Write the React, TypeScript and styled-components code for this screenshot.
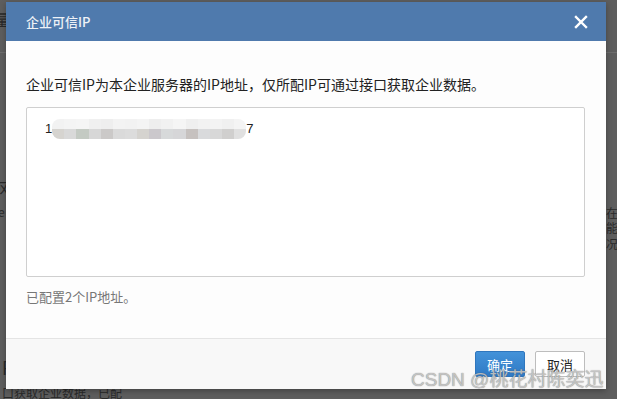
import React from "react";
import styled, { createGlobalStyle } from "styled-components";

const Global = createGlobalStyle`
  html, body { margin: 0; padding: 0; }
  body {
    width: 617px; height: 399px; overflow: hidden;
    font-family: "Noto Sans CJK SC", "Noto Sans", sans-serif;
  }
`;

const Overlay = styled.div`
  position: relative;
  width: 617px;
  height: 399px;
  background: #5e5e5e;
  overflow: hidden;
  box-sizing: border-box;
  padding: 2px 0 0 6px;
`;

const Ghost = styled.span<{ $x: number; $y: number; $size?: number }>`
  position: absolute;
  left: ${(p) => p.$x}px;
  top: ${(p) => p.$y}px;
  font-size: ${(p) => p.$size ?? 13}px;
  color: #2a2a2a;
  line-height: 1;
  white-space: nowrap;
`;

const GhostLine = styled.div<{ $x: number; $y: number; $w: number }>`
  position: absolute;
  left: ${(p) => p.$x}px;
  top: ${(p) => p.$y}px;
  width: ${(p) => p.$w}px;
  height: 1px;
  background: #6e6e6e;
`;

const Dialog = styled.div`
  position: relative;
  width: 600px;
  height: 387px;
  display: flex;
  flex-direction: column;
  background: #fdfdfd;
  box-shadow: 0 2px 6px rgba(0, 0, 0, 0.3);
`;

const Header = styled.div`
  height: 39px;
  flex: none;
  background: #4f7aad;
  display: flex;
  align-items: center;
  justify-content: space-between;
  padding: 0 18px 0 20px;
`;

const Title = styled.span`
  color: #eef2f7;
  font-size: 13px;
  font-weight: 500;
`;

const Close = styled.span`
  display: flex;
  width: 14px;
  height: 14px;
`;

const Body = styled.div`
  flex: 1;
  display: flex;
  flex-direction: column;
  padding: 33px 21px 0 20px;
`;

const Intro = styled.p`
  margin: 0;
  font-size: 14px;
  line-height: 20px;
  color: #222;
`;

const IpBox = styled.div`
  margin-top: 13px;
  height: 170px;
  box-sizing: border-box;
  border: 1px solid #cfcfcf;
  border-radius: 2px;
  background: #fff;
  padding: 11px 18px;
  font-size: 13px;
  color: #222;
  line-height: 20px;
  display: flex;
  flex-direction: column;
  align-items: flex-start;
`;

const IpLine = styled.div`
  display: flex;
  align-items: center;
  height: 20px;
  font-family: "Liberation Sans", Arial, sans-serif;
`;

const Mosaic = styled.span`
  display: inline-flex;
  flex-direction: column;
  width: 194px;
  height: 20px;
  border-radius: 8px;
  overflow: hidden;
  filter: blur(0.4px);
`;

const MosaicRow = styled.span`
  display: flex;
  flex: 1;
`;

const Cell = styled.span`
  flex: 1;
  height: 100%;
`;

const Hint = styled.p`
  margin: 10px 0 0;
  font-size: 13px;
  line-height: 20px;
  color: #777;
`;

const Footer = styled.div`
  height: 51px;
  flex: none;
  box-sizing: border-box;
  border-top: 1px solid #e4e4e4;
  background: #f8f8f8;
  display: flex;
  justify-content: flex-end;
  align-items: flex-start;
  gap: 10px;
  padding: 12px 21px 0 0;
`;

const Button = styled.button<{ $primary?: boolean }>`
  width: 50px;
  height: 26px;
  box-sizing: border-box;
  border-radius: 2px;
  font-family: "Noto Sans CJK SC", sans-serif;
  font-size: 13px;
  padding: 0;
  cursor: pointer;
  border: 1px solid ${(p) => (p.$primary ? "#2f76bd" : "#bdbdbd")};
  background: ${(p) =>
    p.$primary ? "linear-gradient(#4392d9, #2f7ac5)" : "#fff"};
  color: ${(p) => (p.$primary ? "#fff" : "#222")};
`;

const Watermark = styled.span`
  position: absolute;
  left: 411px;
  top: 367px;
  font-size: 19px;
  line-height: 26px;
  color: rgba(215, 215, 215, 0.8);
  text-shadow: 0 0 1px rgba(70, 70, 70, 0.8);
  white-space: nowrap;
  font-family: "Liberation Sans", "Noto Sans CJK SC", sans-serif;
`;

const top = ["#f2f2f2", "#f4f4f4", "#f5f5f5", "#f0f0f0", "#eeeeee", "#f3f3f3", "#f2f2f2", "#f4f4f4", "#eeeeee", "#f1f1f1", "#f5f5f5", "#efefef", "#f2f2f2", "#f3f3f3", "#f0f0f0", "#f4f4f4"];
const bottom = ["#d6d4d0", "#d9d9d9", "#c4cac3", "#d7d7d7", "#cbc9c8", "#dadada", "#dcdcdc", "#d5d3cf", "#cbc8cc", "#d7d9da", "#d6d6d8", "#c6c1bf", "#d9dadc", "#d8d8d8", "#d0cfce", "#e0e0e0"];

export default function App() {
  return (
    <>
      <Global />
      <Overlay>
        <GhostLine $x={0} $y={52} $w={6} />
        <GhostLine $x={606} $y={52} $w={11} />
        <Ghost $x={-6} $y={11} $size={16}>量</Ghost>
        <Ghost $x={-4} $y={180} $size={16}>风</Ghost>
        <Ghost $x={-2} $y={206} $size={12}>e</Ghost>
        <Ghost $x={606} $y={207} $size={12}>在</Ghost>
        <Ghost $x={606} $y={222} $size={12}>能</Ghost>
        <Ghost $x={606} $y={238} $size={12}>况</Ghost>
        <Ghost $x={2} $y={358} $size={18}>P</Ghost>
        <Ghost $x={2} $y={387} $size={12}>口获取企业数据，已配</Ghost>
        <Dialog>
          <Header>
            <Title>企业可信IP</Title>
            <Close>
              <svg width="14" height="14" viewBox="0 0 14 14">
                <path d="M2 2 L12 12 M12 2 L2 12" stroke="#fff" strokeWidth="2.4" strokeLinecap="square" />
              </svg>
            </Close>
          </Header>
          <Body>
            <Intro>企业可信IP为本企业服务器的IP地址，仅所配IP可通过接口获取企业数据。</Intro>
            <IpBox>
              <IpLine>
                1
                <Mosaic>
                  <MosaicRow>
                    {top.map((c, i) => (
                      <Cell key={i} style={{ background: c }} />
                    ))}
                  </MosaicRow>
                  <MosaicRow>
                    {bottom.map((c, i) => (
                      <Cell key={i} style={{ background: c }} />
                    ))}
                  </MosaicRow>
                </Mosaic>
                7
              </IpLine>
            </IpBox>
            <Hint>已配置2个IP地址。</Hint>
          </Body>
          <Footer>
            <Button $primary>确定</Button>
            <Button>取消</Button>
          </Footer>
        </Dialog>
        <Watermark>CSDN @桃花村陈奕迅</Watermark>
      </Overlay>
    </>
  );
}
